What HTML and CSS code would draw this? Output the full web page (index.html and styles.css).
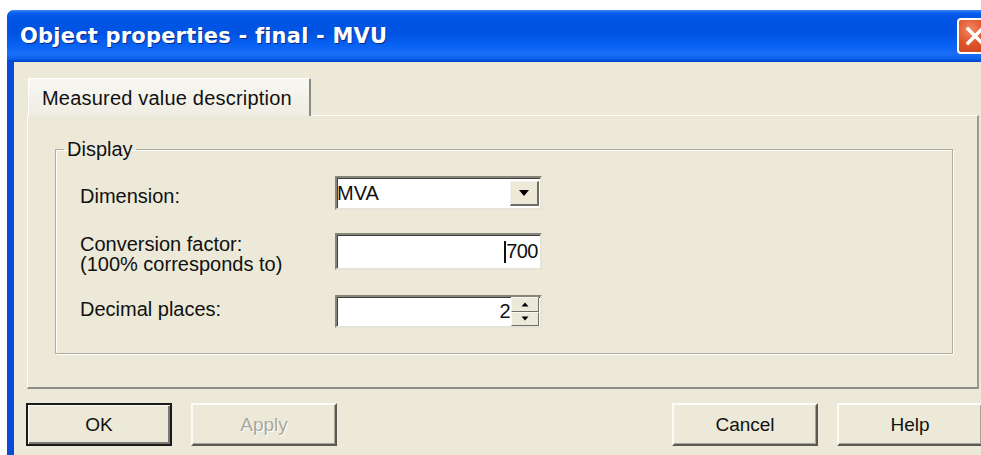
FILE: index.html
```html
<!DOCTYPE html>
<html lang="en">
<head>
<meta charset="utf-8">
<title>Object properties - final - MVU</title>
<link rel="stylesheet" href="styles.css">
</head>
<body>
<div class="window">
  <div class="titlebar">
    <span class="title">Object properties - final - MVU</span>
    <span class="close" aria-label="Close">
      <svg width="30" height="30" viewBox="0 0 30 30"><path d="M8 8 L22 22 M22 8 L8 22" stroke="#fff" stroke-width="3.4" stroke-linecap="square"/></svg>
    </span>
  </div>
  <div class="client">
    <div class="tabstrip">
      <div class="tab">Measured value description</div>
    </div>
    <div class="tabpage">
      <fieldset class="group">
        <legend>Display</legend>
        <div class="form">
          <label class="lbl lbl-dim">Dimension:</label>
          <div class="field combo">
            <span class="val">MVA</span>
            <span class="drop">
              <svg width="12" height="8" viewBox="0 0 12 8"><path d="M1 1 H11 L6 7 Z" fill="#000"/></svg>
            </span>
          </div>
          <label class="lbl lbl-conv">Conversion factor:<br>(100% corresponds to)</label>
          <div class="field edit"><span class="caret"></span><span class="num">700</span></div>
          <label class="lbl lbl-dec">Decimal places:</label>
          <div class="field spin">
            <span class="num">2</span>
            <span class="spinbtns">
              <span class="sb"><svg width="8" height="5" viewBox="0 0 8 5"><path d="M4 0.5 L7.5 4.5 H0.5 Z" fill="#000"/></svg></span>
              <span class="sb"><svg width="8" height="5" viewBox="0 0 8 5"><path d="M0.5 0.5 H7.5 L4 4.5 Z" fill="#000"/></svg></span>
            </span>
          </div>
        </div>
      </fieldset>
    </div>
    <div class="buttons">
      <button class="btn default">OK</button>
      <button class="btn" disabled>Apply</button>
      <button class="btn push-right">Cancel</button>
      <button class="btn">Help</button>
    </div>
  </div>
</div>
</body>
</html>
```
FILE: styles.css
```css
html, body {
  margin: 0;
  padding: 0;
  background: #ffffff;
  overflow: hidden;
  width: 981px;
  height: 455px;
}

body {
  font-family: "Liberation Sans", Arial, sans-serif;
  font-size: 20px;
  color: #111;
}

.window {
  margin: 10px 0 0 7px;
  width: 1000px;
  height: 460px;
  border-left: 7px solid #0a4ad6;
  border-top-left-radius: 7px;
  background: #ece9d8;
}

/* blue caption bar */
.titlebar {
  height: 52px;
  margin-left: -7px;
  padding-left: 13px;
  display: flex;
  align-items: center;
  border-top-left-radius: 7px;
  background: linear-gradient(180deg,
    #3d8af7 0px, #0a5ff0 3px, #0055e5 8px, #0053e2 24px,
    #0a63f3 36px, #1a6ff8 44px, #0a5fe8 49px, #0040c8 52px);
}

.title {
  flex: 1;
  color: #fff;
  font-family: "DejaVu Sans", "Liberation Sans", sans-serif;
  font-weight: bold;
  font-size: 21px;
  letter-spacing: 0.2px;
  text-shadow: 1px 1px 0 #0a2a8a;
}

.close {
  width: 36px;
  height: 36px;
  margin-right: 21px;
  box-sizing: border-box;
  border: 2px solid #fff;
  border-radius: 4px;
  background: radial-gradient(circle at 35% 30%, #f08a66 0%, #e0552c 45%, #c43e1c 100%);
  display: flex;
  align-items: center;
  justify-content: center;
}

.client {
  padding-top: 16px;
}

/* tab header */
.tabstrip {
  display: flex;
  margin-left: 14px;
  height: 37px;
}

.tab {
  width: 283px;
  box-sizing: border-box;
  padding: 8px 0 0 13px;
  letter-spacing: 0.2px;
  background: linear-gradient(180deg, #f8f7f2 0%, #efede3 100%);
  border-left: 1px solid #fff;
  border-top: 1px solid #fff;
  border-right: 2px solid #8a8a80;
  border-top-right-radius: 2px;
  position: relative;
  z-index: 1;
  margin-bottom: -1px;
  height: 38px;
}

/* tab page body */
.tabpage {
  margin-left: 13px;
  width: 952px;
  height: 274px;
  box-sizing: border-box;
  border-top: 1px solid #fdfdfa;
  border-left: 1px solid #fdfdfa;
  border-right: 2px solid #9a9a90;
  border-bottom: 2px solid #8c8c84;
  padding: 22px 24px 0 27px;
  background: #ece9d8;
}

.group {
  margin: 0;
  padding: 16px 0 0 0;
  height: 216px;
  box-sizing: border-box;
  border: 1px solid #b0ae9f;
  box-shadow: inset 1px 1px 0 #fff, 1px 1px 0 #fff;
}

.group legend {
  margin-left: 8px;
  padding: 0 3px;
  line-height: 22px;
}

.form {
  display: grid;
  grid-template-columns: 255px 207px;
  grid-template-rows: 34px 37px 35px;
  row-gap: 23px;
  padding-left: 24px;
}

.form > .field:nth-of-type(3) {
  margin-top: 2px;
}

.lbl {
  line-height: 20px;
}

.lbl-dim { align-self: center; padding-top: 6px; }
.lbl-conv { padding-top: 1px; }
.lbl-dec { padding-top: 4px; margin-top: 2px; }

/* sunken input boxes */
.field {
  position: relative;
  box-sizing: border-box;
  background: #fff;
  border-top: 2px solid #858579;
  border-left: 2px solid #858579;
  border-right: 2px solid #e6e4d8;
  border-bottom: 2px solid #e6e4d8;
  box-shadow: inset 1px 1px 0 #404040;
  display: flex;
  align-items: center;
}

.combo .val {
  flex: 1;
  padding-left: 0;
}

.drop {
  width: 29px;
  height: 25px;
  margin-right: 1px;
  box-sizing: border-box;
  background: #ece9d8;
  border-top: 1px solid #f4f3ee;
  border-left: 1px solid #f4f3ee;
  border-right: 2px solid #6e6e66;
  border-bottom: 2px solid #6e6e66;
  display: flex;
  align-items: center;
  justify-content: center;
}

.edit {
  justify-content: flex-end;
  padding-right: 2px;
}

.caret {
  width: 2px;
  height: 22px;
  background: #111;
}

.num {
  letter-spacing: -0.5px;
}

.spin {
  justify-content: flex-end;
}

.spin .num {
  margin-right: 1px;
}

.spinbtns {
  width: 28px;
  height: 29px;
  display: flex;
  flex-direction: column;
  margin-right: 1px;
}

.sb {
  flex: 1;
  box-sizing: border-box;
  background: #ece9d8;
  border-top: 1px solid #f8f7f2;
  border-left: 1px solid #f8f7f2;
  border-right: 1px solid #6e6e66;
  border-bottom: 1px solid #6e6e66;
  display: flex;
  align-items: center;
  justify-content: center;
}

/* dialog buttons */
.buttons {
  display: flex;
  gap: 19px;
  padding: 14px 31px 0 12px;
}

.btn {
  width: 146px;
  height: 43px;
  font-family: "Liberation Sans", Arial, sans-serif;
  font-size: 19px;
  color: #111;
  background: #ece9d8;
  border-top: 2px solid #fbfbf7;
  border-left: 2px solid #fbfbf7;
  border-right: 2px solid #5a5a54;
  border-bottom: 2px solid #5a5a54;
  box-shadow: inset -1px -1px 0 #a6a498;
  padding: 0;
}

.btn.default {
  border: 2px solid #1a1a1a;
  box-shadow: inset 1px 1px 0 #fbfbf7, inset -2px -2px 0 #7a7a72;
}

.btn:disabled {
  color: #a8a79c;
  text-shadow: 1px 1px 0 #fff;
}

.push-right {
  margin-left: auto;
}
```
